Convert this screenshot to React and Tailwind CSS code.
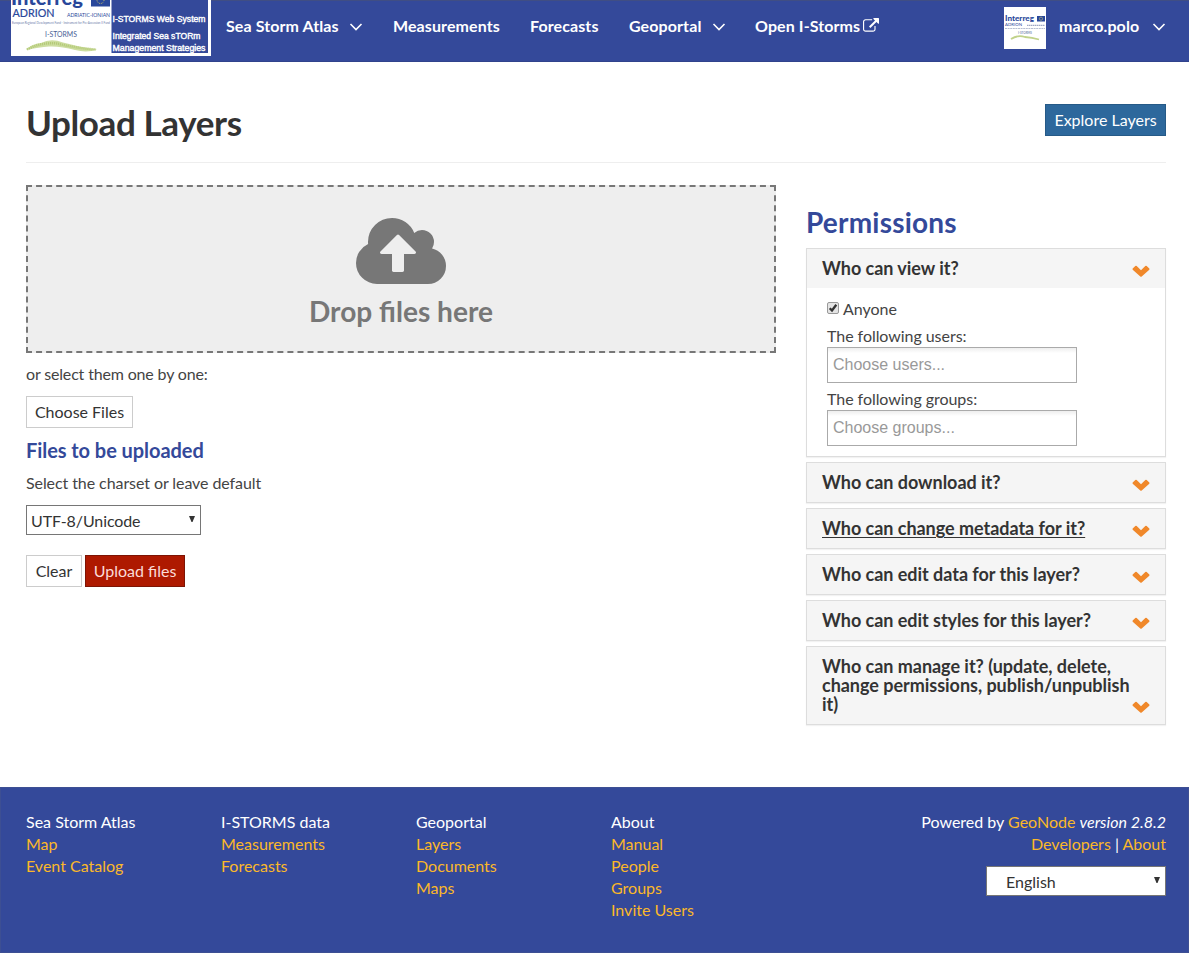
import React from "react";

const lato = "font-['Lato',sans-serif]";

function Caret({ className = "" }) {
  return (
    <svg className={`h-[8px] w-[14px] shrink-0 ${className}`} viewBox="0 0 14 8" fill="none" stroke="#fff" strokeWidth="1.6">
      <path d="M1.500 1 L7 6.500 L12.500 1" />
    </svg>
  );
}

function Swoosh() {
  return (
    <g fill="none">
      <path d="M15 50 Q20 44 30 43 Q40 38 52 42.500 Q68 47 86 49.500 Q76 53 64 50 Q50 46 38 46.500 Q28 47 15 50Z" fill="#cddda0" />
      <path d="M16 49.500 Q30 42 46 43.500 Q64 48 85 49.500" stroke="#b4ca78" strokeWidth="2.500" strokeDasharray="1.200 .8" />
    </g>
  );
}

function InterregArt() {
  return (
    <g fontFamily="Lato" fontWeight="400">
      <text x="0" y="4.500" fontSize="21" fontWeight="900" fill="#29479a" textLength="72" lengthAdjust="spacingAndGlyphs">Interreg</text>
      <rect x="80" y="-6" width="19" height="12.500" fill="#29479a" />
      <circle cx="89.500" cy="0" r="3.500" fill="none" stroke="#c9c36a" strokeWidth="1" strokeDasharray="1 1" />
      <text x="1.500" y="16.500" fontSize="10.500" fill="#29479a" stroke="#29479a" strokeWidth=".2" textLength="42" lengthAdjust="spacingAndGlyphs">ADRION</text>
      <text x="56" y="16.500" fontSize="5" fill="#29479a" textLength="43" lengthAdjust="spacingAndGlyphs">ADRIATIC-IONIAN</text>
      <text x="1" y="23.500" fontSize="3" fill="#6878a8" textLength="98" lengthAdjust="spacingAndGlyphs">European Regional Development Fund - Instrument for Pre-Accession II Fund</text>
      <text x="34" y="36.500" fontSize="7.500" fill="#4a5f96" textLength="32" lengthAdjust="spacingAndGlyphs">I-STORMS</text>
      <Swoosh />
    </g>
  );
}

function Logo() {
  return (
    <svg className="h-[56px] w-[200px] shrink-0" viewBox="0 0 200 56">
      <rect width="200" height="56" fill="#fff" />
      <InterregArt />
      <rect x="100.500" width="96.500" height="53" fill="#34499a" />
      <g fill="#fff" stroke="#fff" strokeWidth="0.4" fontFamily="Liberation Sans" fontWeight="400" fontSize="9">
        <text x="101.500" y="22" textLength="93" lengthAdjust="spacingAndGlyphs">I-STORMS Web System</text>
        <text x="101.500" y="39" textLength="88" lengthAdjust="spacingAndGlyphs">Integrated Sea sTORm</text>
        <text x="101.500" y="50.500" textLength="93" lengthAdjust="spacingAndGlyphs">Management Strategies</text>
      </g>
    </svg>
  );
}

function Avatar() {
  return (
    <svg className="h-[42px] w-[42px] shrink-0" viewBox="0 0 42 42" fontFamily="Lato" fontWeight="400">
      <rect width="42" height="42" fill="#fff" />
      <text x="1" y="14" fontSize="8" fontWeight="900" fill="#29479a" textLength="29" lengthAdjust="spacingAndGlyphs">Interreg</text>
      <rect x="33" y="9" width="8" height="5.500" fill="#29479a" />
      <circle cx="37" cy="11.700" r="1.600" fill="none" stroke="#c9c37a" strokeWidth="0.6" />
      <text x="1" y="19" fontSize="4.200" fill="#29479a" textLength="17" lengthAdjust="spacingAndGlyphs">ADRION</text>
      <path d="M23 18.300h18" stroke="#8792b5" strokeWidth="1" strokeDasharray="1.500 .5" />
      <path d="M1 21.500h40" stroke="#a5adc6" strokeWidth=".8" strokeDasharray="2 .6" />
      <text x="14" y="27" fontSize="3.500" fill="#4a5f96" textLength="14" lengthAdjust="spacingAndGlyphs">I-STORMS</text>
      <path d="M7 32 Q14 27.500 21 30 Q28 30.500 35 32.500" stroke="#c0d28a" strokeWidth="1.800" fill="none" />
    </svg>
  );
}

function ExternalIcon() {
  return (
    <svg className="ml-[3px] h-4 w-4" viewBox="0 0 1792 1792" fill="#fff">
      <path d="M1408 928v320q0 119-84.500 203.500t-203.500 84.500h-832q-119 0-203.500-84.500t-84.500-203.500v-832q0-119 84.500-203.500t203.500-84.500h704q14 0 23 9t9 23v64q0 14-9 23t-23 9h-704q-66 0-113 47t-47 113v832q0 66 47 113t113 47h832q66 0 113-47t47-113v-320q0-14 9-23t23-9h64q14 0 23 9t9 23zm384-864v512q0 26-19 45t-45 19-45-19l-176-176-652 652q-10 10-23 10t-23-10l-114-114q-10-10-10-23t10-23l652-652-176-176q-19-19-19-45t19-45 45-19h512q26 0 45 19t19 45z" />
    </svg>
  );
}

function Chevron() {
  return (
    <svg className="mb-[1px] h-[12px] w-[18px] shrink-0" viewBox="0 0 18 12">
      <path d="M0.700 3.600 L3.300 1 Q4 .5 4.700 1 L9 5.200 L13.300 1 Q14 .5 14.700 1 L17.300 3.600 Q17.700 4.200 17.300 4.800 L9.700 11.500 Q9 12 8.300 11.500 L.7 4.800 Q.3 4.200 .7 3.600Z" fill="#f0882a" />
    </svg>
  );
}

function Panel({ title, underline, tall, children }) {
  return (
    <div className="border border-[#dddddd] bg-white shadow-[0_1px_1px_rgba(0,0,0,0.05)]">
      <div className={`flex items-end justify-between bg-[#f5f5f5] pr-[15px] pb-[10px] pl-[15px] ${tall ? "h-[77px]" : "h-[39px]"}`}>
        <h4 className={`w-[310px] text-[18px] leading-[19px] font-bold tracking-[-0.03px] whitespace-nowrap text-[#333] ${underline ? "underline decoration-1 underline-offset-2" : ""}`}>
          {title}
        </h4>
        <Chevron />
      </div>
      {children}
    </div>
  );
}

function Field({ label, placeholder }) {
  return (
    <div>
      <div className="h-[22px] leading-[22px] tracking-[-0.05px]">{label}</div>
      <div className="h-[36px] w-[250px] border border-[#aaa] bg-white bg-linear-to-b from-[#eee] to-white to-15% pl-[5px] font-['Liberation_Sans',sans-serif] text-[16px] leading-[34px] text-[#999]">
        {placeholder}
      </div>
    </div>
  );
}

function Select({ label, className }) {
  return (
    <div className={`flex h-[30px] items-center justify-between border border-[#767676] bg-white pt-[2px] text-[#333] ${className}`}>
      <span>{label}</span>
      <svg className="mt-[-5px] h-[6px] w-[6px]" viewBox="0 0 6 6" fill="#333"><path d="M0 0h6L3.500 6h-1z" /></svg>
    </div>
  );
}

function LinkColumn({ title, links }) {
  return (
    <div className="w-[195px]">
      <div>{title}</div>
      {links.map((l) => <a key={l} className="block text-[#fbb829]">{l}</a>)}
    </div>
  );
}

const columns = [
  { title: "Sea Storm Atlas", links: ["Map", "Event Catalog"] },
  { title: "I-STORMS data", links: ["Measurements", "Forecasts"] },
  { title: "Geoportal", links: ["Layers", "Documents", "Maps"] },
  { title: "About", links: ["Manual", "People", "Groups", "Invite Users"] },
];

export default function App() {
  return (
    <div className={`${lato} flex h-[953px] w-[1189px] flex-col overflow-hidden bg-white text-[16px] leading-[22px] text-[#444]`}>
      <header className="flex h-[62px] shrink-0 items-start bg-[#34499a] pr-[23px] pl-[11px] font-bold whitespace-nowrap text-white shadow-[inset_0_1px_0_#404e84,inset_0_-1px_0_#30438c]">
        <Logo />
        <nav className="flex h-[52px] flex-1 items-center pl-[15px] tracking-[0.1px]">
          <a className="flex w-[167px] items-center justify-between pr-[30px]">Sea Storm Atlas <Caret className="mt-[2px]" /></a>
          <a className="w-[137px]">Measurements</a>
          <a className="w-[99px]">Forecasts</a>
          <a className="flex w-[126px] items-center justify-between pr-[29px]">Geoportal <Caret className="mt-[2px]" /></a>
          <a className="flex items-center">Open I-Storms<ExternalIcon /></a>
        </nav>
        <div className="flex h-[53px] items-center pt-[3px]">
          <Avatar />
          <span className="mt-[-5px] ml-[13px] w-[93px] tracking-[0.1px]">marco.polo</span>
          <Caret className="mt-[-3px]" />
        </div>
      </header>

      <main className="h-[725px] shrink-0 pt-[42px] pr-[23px] pl-[26px]">
        <div className="flex h-[59px] items-start justify-between border-b border-[#eee]">
          <h1 className="mt-[-2px] text-[35px] leading-[40px] font-bold tracking-[-0.38px] text-[#333]">Upload Layers</h1>
          <button className="h-[32px] w-[121px] border border-[#265a87] bg-[#2d689c] text-white">Explore Layers</button>
        </div>
        <div className="flex gap-[30px]">
          <section className="w-[750px] pt-[22px]">
            <div className="flex h-[168px] flex-col items-center border-2 border-dashed border-[#777] bg-[#eee] pt-[25px] text-[#777]">
              <svg className="h-[84px] w-[90px]" viewBox="0 0 1920 1792" fill="#777">
                <path d="M1280 864q0-14-9-23l-352-352q-9-9-23-9t-23 9l-351 351q-10 12-10 24 0 14 9 23t23 9h224v352q0 13 9.500 22.500t22.500 9.500h192q13 0 22.500-9.500t9.500-22.500v-352h224q13 0 22.500-9.500t9.500-22.500zm640 288q0 159-112.500 271.500t-271.500 112.500h-1088q-185 0-316.500-131.500t-131.500-316.500q0-130 70-240t188-165q-2-30-2-43 0-212 150-362t362-150q156 0 285.500 87t188.500 231q71-62 166-62 106 0 181 75t75 181q0 76-41 138 130 31 213.500 135.500t83.500 238.500z" />
              </svg>
              <h3 className="text-[28.1px] leading-[30px] font-bold">Drop files here</h3>
            </div>
            <p className="mt-[10px] tracking-[-0.16px]">or select them one by one:</p>
            <button className="mt-[11px] block h-[32px] w-[107px] border border-[#ccc] bg-white text-[#333]">Choose Files</button>
            <h4 className="mt-[11px] text-[20px] leading-[22px] font-bold tracking-[-0.06px] text-[#34499a]">Files to be uploaded</h4>
            <p className="mt-[11px] tracking-[-0.08px]">Select the charset or leave default</p>
            <Select label="UTF-8/Unicode" className="mt-[11px] w-[175px] pr-[5px] pl-[4px] tracking-[-0.1px]" />
            <div className="mt-[20px] flex gap-[3px]">
              <button className="h-[32px] w-[56px] border border-[#ccc] bg-white text-[#333]">Clear</button>
              <button className="h-[32px] w-[100px] border border-[#7d1404] bg-[#ae1900] text-[#fbdcd8]">Upload files</button>
            </div>
          </section>

          <aside className="w-[360px] pt-[42px]">
            <h2 className="h-[43px] text-[28px] leading-[34px] font-bold tracking-[0.2px] text-[#34499a]">Permissions</h2>
            <div className="flex flex-col gap-[5px]">
              <Panel title="Who can view it?">
                <div className="flex h-[168px] flex-col pt-[10px] pl-[20px]">
                  <label className="mb-[5px] flex h-[22px] items-center gap-[4px]">
                    <svg className="mt-[-2px] h-3 w-3" viewBox="0 0 12 12">
                      <rect x=".5" y=".5" width="11" height="11" rx="1.500" fill="#e4e4e4" stroke="#999" />
                      <path d="M2.700 6.200 L5 8.500 L9.300 2.800" fill="none" stroke="#333" strokeWidth="2.300" />
                    </svg>
                    Anyone
                  </label>
                  <div className="flex flex-col gap-[5px]">
                    <Field label="The following users:" placeholder="Choose users..." />
                    <Field label="The following groups:" placeholder="Choose groups..." />
                  </div>
                </div>
              </Panel>
              <Panel title="Who can download it?" />
              <Panel title="Who can change metadata for it?" underline />
              <Panel title="Who can edit data for this layer?" />
              <Panel title="Who can edit styles for this layer?" />
              <Panel tall title={<>Who can manage it? (update, delete,<br />change permissions, publish/unpublish<br />it)</>} />
            </div>
          </aside>
        </div>
      </main>

      <footer className="flex h-[166px] shrink-0 justify-between bg-[#34499a] pt-[24px] pr-[23px] pl-[26px] text-white shadow-[inset_0_0_0_1px_#3d4f93]">
        <div className="flex">
          {columns.map((c) => <LinkColumn key={c.title} {...c} />)}
        </div>
        <div className="flex flex-col items-end">
          <div>Powered by <a className="text-[#fbb829]">GeoNode</a> <i>version 2.8.2</i></div>
          <div><a className="text-[#fbb829]">Developers</a> | <a className="text-[#fbb829]">About</a></div>
          <Select label="English" className="mt-[11px] w-[180px] pr-[5px] pl-[19px]" />
        </div>
      </footer>
    </div>
  );
}
